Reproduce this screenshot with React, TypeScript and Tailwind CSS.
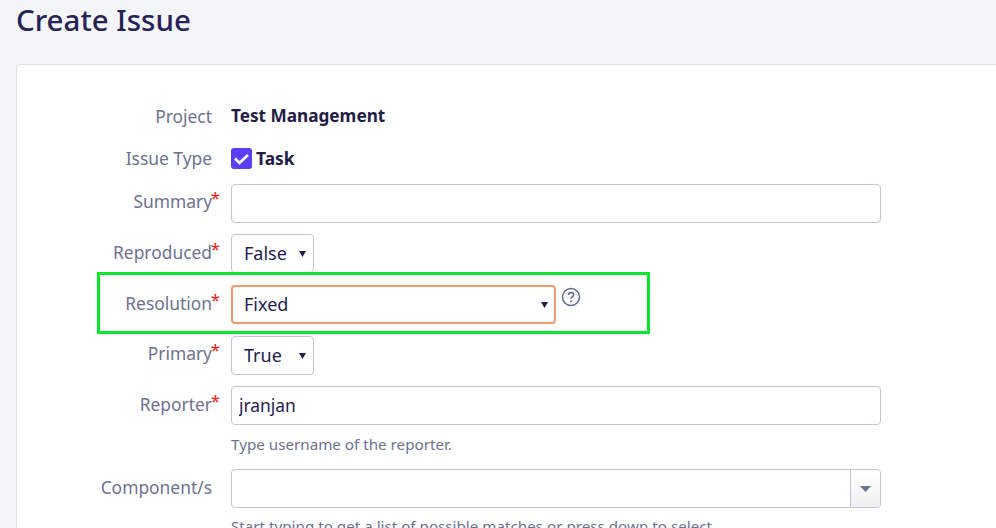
import React from 'react';

const font = { fontFamily: '"Noto Sans", sans-serif' };

function Caret({ className }: { className: string }) {
  return (
    <svg width="7" height="6" viewBox="0 0 7 6" className={className}>
      <path d="M0 0h7L3.5 6z" fill="currentColor" />
    </svg>
  );
}

function Label({ text, required }: { text: string; required?: boolean }) {
  return (
    <div className="relative w-[214px] shrink-0 pr-[19px] text-right text-[17.4px] leading-6 text-[#6e7191]">
      {text}
      {required && <span className="absolute right-[11px] top-[-3px] text-[17px] text-[#f5200f]">*</span>}
    </div>
  );
}

function Select({ value, focused, width }: { value: string; focused?: boolean; width: string }) {
  return (
    <div className={`relative ${width}`}>
      <select
        defaultValue={value}
        className={`h-[39px] w-full appearance-none rounded bg-white text-[18px] text-[#1f1c52] outline-none ${
          focused ? 'border-2 border-[#f19a6b] pl-[11px]' : 'border border-[#c4c5d6] pl-3'
        }`}
      >
        <option>{value}</option>
      </select>
      <Caret className="pointer-events-none absolute right-[8px] top-[17px] text-[#1f1c52]" />
    </div>
  );
}

export default function App() {
  return (
    <div style={font} className="h-[528px] w-[996px] overflow-hidden bg-[#f4f5f8] pl-4">
      <h1 className="h-[64px] text-[29.5px] font-medium leading-[39px] text-[#262356]">Create Issue</h1>
      <div className="relative h-[600px] w-[1000px] rounded border border-[#e0e1e8] bg-white pt-[39px]">
        <div className="flex h-[24px] items-center">
          <Label text="Project" />
          <div className="text-[17.2px] font-bold text-[#1f1c46]">Test Management</div>
        </div>
        <div className="mt-[18px] flex h-[24px] items-center">
          <Label text="Issue Type" />
          <svg width="21" height="21" viewBox="0 0 21 21" className="mr-[4px]">
            <rect width="21" height="21" rx="3" fill="#5b3ff6" />
            <path d="M4 10.5l4.5 4.5 8.5-8" fill="none" stroke="#fff" strokeWidth="2.6" />
          </svg>
          <div className="text-[17.4px] font-bold text-[#1f1c46]">Task</div>
        </div>
        <div className="mt-[14px] flex">
          <div className="pt-[5px]"><Label text="Summary" required /></div>
          <input className="h-[39px] w-[650px] rounded border border-[#c4c5d6] bg-white outline-none" />
        </div>
        <div className="mt-[11px] flex">
          <div className="pt-[6px]"><Label text="Reproduced" required /></div>
          <Select value="False" width="w-[83px]" />
        </div>
        <div className="mt-[12px] flex">
          <div className="pt-[6px]"><Label text="Resolution" required /></div>
          <Select value="Fixed" focused width="w-[325px]" />
          <svg width="20" height="20" viewBox="0 0 20 20" className="ml-[5px] mt-[2px] text-[#5f6a94]" fill="none">
            <circle cx="10" cy="10" r="8.5" stroke="currentColor" strokeWidth="1.5" />
            <path d="M7.5 8c0-3.2 5.2-3.2 5.2 0 0 1.9-2.7 1.9-2.7 3.8" stroke="currentColor" strokeWidth="1.5" />
            <circle cx="10" cy="14.2" r="1" fill="currentColor" />
          </svg>
        </div>
        <div className="mt-[12px] flex">
          <div className="pt-[5px]"><Label text="Primary" required /></div>
          <Select value="True" width="w-[83px]" />
        </div>
        <div className="mt-[11px] flex">
          <div className="pt-[6px]"><Label text="Reporter" required /></div>
          <div>
            <input
              defaultValue="jranjan"
              className="h-[39px] w-[650px] rounded border border-[#c4c5d6] bg-white px-[7px] pb-[2px] text-[17.4px] text-[#1f1c52] outline-none"
            />
            <div className="mt-[9px] text-[15.2px] leading-5 text-[#6e7191]">Type username of the reporter.</div>
          </div>
        </div>
        <div className="mt-[15px] flex">
          <div className="pt-[6px]"><Label text="Component/s" /></div>
          <div>
            <div className="flex h-[39px] w-[650px] overflow-hidden rounded border border-[#c4c5d6] bg-white">
              <input className="min-w-0 flex-1 outline-none" />
              <div className="flex w-[30px] items-center justify-center border-l border-[#c4c5d6] bg-gradient-to-b from-white to-[#f0f0f2]">
                <svg width="11" height="6" viewBox="0 0 11 6"><path d="M0 0h11L5.5 6z" fill="#6e7191" /></svg>
              </div>
            </div>
            <div className="mt-[8px] text-[15.2px] leading-5 text-[#6e7191]">
              Start typing to get a list of possible matches or press down to select.
            </div>
          </div>
        </div>
        <div className="absolute left-[80px] top-[207px] h-[62px] w-[553px] border-[3px] border-[#0ae52d]" />
      </div>
    </div>
  );
}
